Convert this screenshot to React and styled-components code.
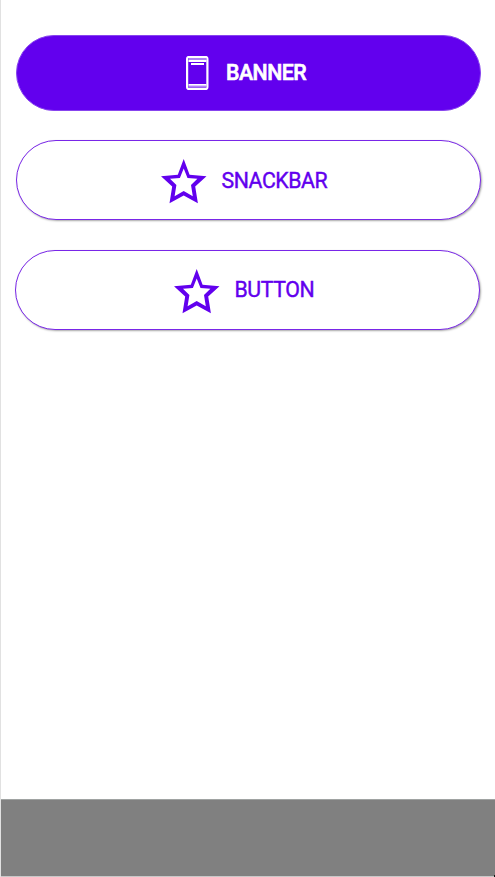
import React from 'react';
import styled, { createGlobalStyle } from 'styled-components';

const GlobalStyle = createGlobalStyle`
  * { box-sizing: border-box; }
  body { margin: 0; background: #fff; }
`;

const Screen = styled.div`
  display: flex;
  flex-direction: column;
  width: 100%;
  height: 877px;
  border-left: 1px solid #e1e1e1;
  overflow: hidden;
  font-family: Roboto, sans-serif;
`;

const ButtonList = styled.main`
  flex: 1;
  display: flex;
  flex-direction: column;
  gap: 30px;
  padding: 35px 14px 0 14.5px;
`;

const PillButton = styled.button`
  display: flex;
  align-items: flex-start;
  flex: none;
  width: ${(p) => p.$width || 465}px;
  height: ${(p) => (p.$filled ? 76 : 80)}px;
  margin: 0 0 ${(p) => (p.$filled ? -1 : 0)}px ${(p) => p.$shift || 0}px;
  padding: 0 0 0 ${(p) => p.$inset}px;
  border: 1px solid ${(p) => (p.$filled ? '#8744ee' : '#7926e8')};
  border-radius: 40px;
  background: ${(p) => (p.$filled ? '#6200ee' : '#fff')};
  color: ${(p) => (p.$filled ? '#fff' : '#6200ee')};
  box-shadow: ${(p) => (p.$filled ? 'none' : '1px 1px 2px rgba(0, 0, 0, 0.35)')};
  font-family: inherit;
`;

const Label = styled.span`
  margin: ${(p) => p.$top}px 0 0 ${(p) => p.$gap}px;
  font-size: 21.3px;
  line-height: 26px;
  font-weight: ${(p) => (p.$bold ? 500 : 400)};
  -webkit-text-stroke: ${(p) => (p.$bold ? 0.6 : 0.4)}px currentColor;
  letter-spacing: ${(p) => p.$tracking}px;
  white-space: nowrap;
`;

const IconSvg = styled.svg`
  display: block;
  flex: none;
  margin-top: ${(p) => p.$top}px;
`;

const Footer = styled.footer`
  position: relative;
  flex: none;
  height: 78px;
  background: #808080;
  border-top: 1px solid #a0a3a2;
  border-bottom: 1px solid #c8c8c8;

  &::after {
    content: '';
    position: absolute;
    right: 0;
    bottom: -1px;
    width: 1px;
    height: 2px;
    background: #111;
  }
`;

function PhoneIcon() {
  return (
    <IconSvg $top={20} width="23" height="34" viewBox="0 0 23 34" fill="none">
      <rect x="1.1" y="1" width="20.3" height="32" rx="1.7" stroke="#fff" strokeWidth="2.2" />
      <path d="M2.5 3H20.4M2.5 30.7H20.4" stroke="#b080f7" strokeWidth="2" />
      <path d="M2.5 5H20.4M2.5 28.8H20.4" stroke="#fff" strokeWidth="1.8" />
      <path d="M5 8H18" stroke="#fff" strokeWidth="2" />
    </IconSvg>
  );
}

function StarIcon() {
  return (
    <IconSvg $top={18} width="46" height="45" viewBox="0 0 46 45">
      <path
        fill="currentColor"
        fillRule="evenodd"
        d="M22.7 0L28.6 15.8L45.5 17.2L34.2 27.6L36.9 44.3L22.7 36.6L8.5 44.3L11.2 27.6L0 17.2L16.8 15.8Z
           M22.7 9.5L18.9 19L9 19.8L15.4 26L13.6 37.3L22.7 32L31.8 37.3L30 26L36.4 19.8L26.5 19Z"
      />
    </IconSvg>
  );
}

export default function App() {
  return (
    <>
      <GlobalStyle />
      <Screen>
        <ButtonList>
          <PillButton $filled $inset={169.5}>
            <PhoneIcon />
            <Label $bold $top={23.5} $gap={17} $tracking={-0.5}>BANNER</Label>
          </PillButton>
          <PillButton $inset={144} $shift={0.5}>
            <StarIcon />
            <Label $top={27} $gap={14.5} $tracking={-0.45}>SNACKBAR</Label>
          </PillButton>
          <PillButton $inset={158} $shift={-0.5}>
            <StarIcon />
            <Label $top={25.5} $gap={14.5} $tracking={-0.4}>BUTTON</Label>
          </PillButton>
        </ButtonList>
        <Footer />
      </Screen>
    </>
  );
}
